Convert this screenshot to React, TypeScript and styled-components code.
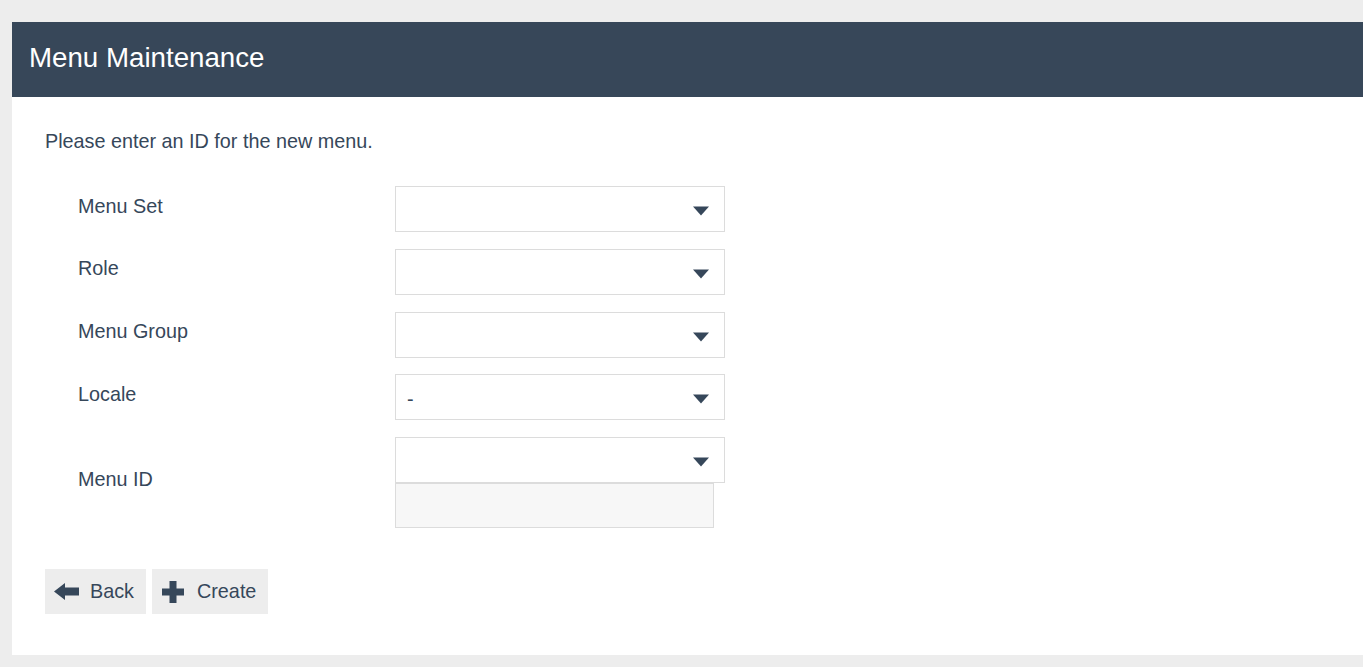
import React from "react";
import styled, { createGlobalStyle } from "styled-components";

const Global = createGlobalStyle`
  html, body { margin: 0; padding: 0; background: #ededed; }
  body { font-family: "Liberation Sans", Arial, sans-serif; color: #36475a; overflow: hidden; }
`;

const Page = styled.div`
  padding: 22px 0 12px 12px;
`;

const Panel = styled.div`
  background: #fff;
  height: 633px;
  display: flex;
  flex-direction: column;
`;

const Header = styled.div`
  background: #374759;
  height: 75px;
  display: flex;
  align-items: center;
  padding-left: 17px;
  padding-bottom: 3px;
  box-sizing: border-box;
`;

const Title = styled.h1`
  margin: 0;
  color: #fff;
  font-weight: normal;
  font-size: 27.7px;
`;

const Body = styled.div`
  padding: 33px 0 0 33px;
`;

const Intro = styled.p`
  margin: 0 0 33px;
  font-size: 19.8px;
  line-height: 23px;
`;

const Form = styled.div`
  display: grid;
  grid-template-columns: 317px 330px;
  row-gap: 16.75px;
  padding-left: 33px;
`;

const Label = styled.label`
  font-size: 19.8px;
  align-self: center;
  padding-bottom: 6px;
`;

const Stack = styled.div`
  display: flex;
  flex-direction: column;
`;

const Select = styled.div`
  height: 46px;
  box-sizing: border-box;
  border: 1px solid #dcdcdc;
  background: #fff;
  display: flex;
  align-items: center;
  justify-content: space-between;
  padding: 4px 15px 0 11px;
  font-size: 19.8px;
`;

const Input = styled.div`
  height: 45px;
  width: 319px;
  box-sizing: border-box;
  border: 1px solid #dcdcdc;
  background: #f7f7f7;
`;

const Buttons = styled.div`
  display: flex;
  gap: 6px;
  margin-top: 41px;
`;

const Button = styled.button<{ $w: number; $pad: number; $gap: number }>`
  width: ${(p) => p.$w}px;
  height: 45px;
  border: none;
  background: #ededed;
  color: #36475a;
  font-family: "Liberation Sans", Arial, sans-serif;
  font-size: 19.8px;
  display: flex;
  align-items: center;
  gap: ${(p) => p.$gap}px;
  padding: 0 0 0 ${(p) => p.$pad}px;
  cursor: pointer;
`;

const Caret = () => (
  <svg width="16" height="10" viewBox="0 0 16 10">
    <path d="M0 0.5 H16 L8 9.5 Z" fill="#36475a" />
  </svg>
);

const BackIcon = () => (
  <svg width="25" height="17" viewBox="0 0 25 17">
    <path d="M0 8.5 L11 0 V4.5 H25 V12.5 H11 V17 Z" fill="#36475a" />
  </svg>
);

const PlusIcon = () => (
  <svg width="22" height="22" viewBox="0 0 22 22">
    <path d="M7.5 0 H14.5 V7.5 H22 V14.5 H14.5 V22 H7.5 V14.5 H0 V7.5 H7.5 Z" fill="#36475a" />
  </svg>
);

const fields: { label: string; value?: string }[] = [
  { label: "Menu Set" },
  { label: "Role" },
  { label: "Menu Group" },
  { label: "Locale", value: "-" },
];

export default function App() {
  return (
    <>
      <Global />
      <Page>
        <Panel>
          <Header>
            <Title>Menu Maintenance</Title>
          </Header>
          <Body>
            <Intro>Please enter an ID for the new menu.</Intro>
            <Form>
              {fields.map((f) => (
                <React.Fragment key={f.label}>
                  <Label>{f.label}</Label>
                  <Select>
                    <span>{f.value ?? ""}</span>
                    <Caret />
                  </Select>
                </React.Fragment>
              ))}
              <Label>Menu ID</Label>
              <Stack>
                <Select>
                  <span />
                  <Caret />
                </Select>
                <Input />
              </Stack>
            </Form>
            <Buttons>
              <Button $w={101} $pad={9} $gap={11}>
                <BackIcon />
                Back
              </Button>
              <Button $w={116} $pad={10} $gap={13}>
                <PlusIcon />
                Create
              </Button>
            </Buttons>
          </Body>
        </Panel>
      </Page>
    </>
  );
}
